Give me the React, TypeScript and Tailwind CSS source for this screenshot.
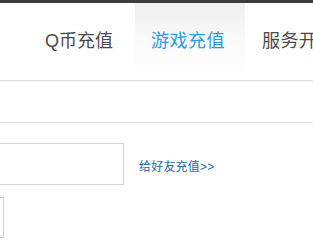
import React from "react";

export default function App() {
  return (
    <div
      className="w-[313px] h-[244px] bg-white overflow-hidden"
      style={{ fontFamily: '"Liberation Sans", "Noto Sans CJK SC", sans-serif' }}
    >
      <div className="h-[3px] bg-[#3d3d3d]" />
      <div className="h-[78px] flex pl-[23px] border-b border-[#dedede] shadow-[0_1px_2px_rgba(0,0,0,0.06)] whitespace-nowrap">
        <div className="w-[112px] shrink-0 flex items-center justify-center text-[18px] text-[#4a4a4a]">
          Q币充值
        </div>
        <div className="w-[110px] shrink-0 flex items-center pl-[16px] text-[18px] tracking-[0.5px] text-[#2a9be3] bg-gradient-to-b from-[#efefef] via-[#fafafa] to-white">
          游戏充值
        </div>
        <div className="w-[110px] shrink-0 flex items-center pl-[17px] text-[18px] tracking-[0.5px] text-[#4a4a4a]">
          服务开通
        </div>
      </div>
      <div className="mt-[41px] border-t border-[#e3e3e3]">
        <div className="mt-[20px] flex items-center">
          <div className="-ml-[100px] w-[224px] h-[42px] shrink-0 border border-[#d4d4d4] bg-white" />
          <a className="ml-[15px] pt-[5px] text-[12px] text-[#2866b0] whitespace-nowrap tracking-[0.2px]">
            给好友充值&gt;&gt;
          </a>
        </div>
        <div className="mt-[12px] -ml-[100px] w-[104px] h-[41px] border border-[#d4d4d4]" />
      </div>
    </div>
  );
}
